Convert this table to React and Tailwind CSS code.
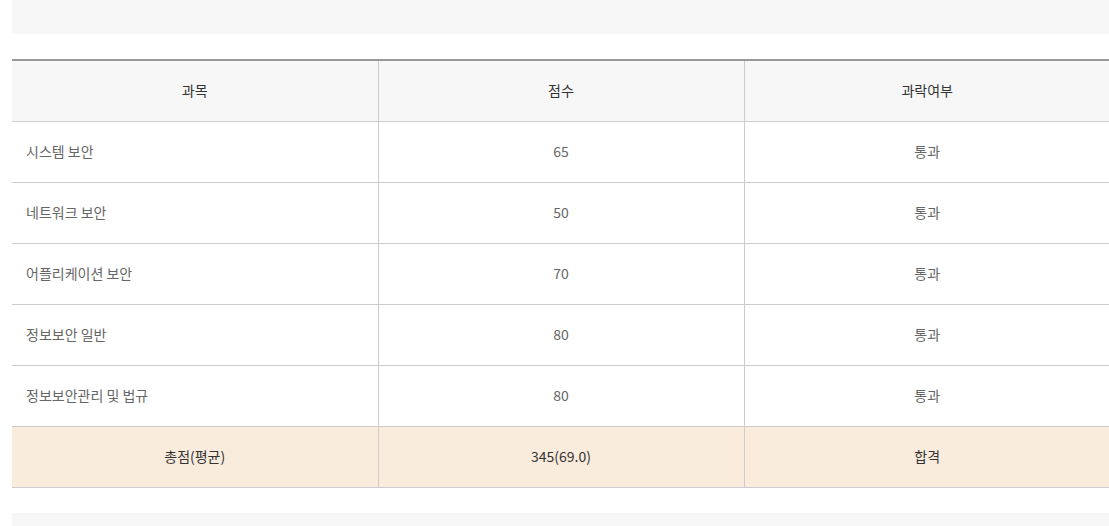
import React from "react";

const rows = [
  { subject: "시스템 보안", score: "65", result: "통과" },
  { subject: "네트워크 보안", score: "50", result: "통과" },
  { subject: "어플리케이션 보안", score: "70", result: "통과" },
  { subject: "정보보안 일반", score: "80", result: "통과" },
  { subject: "정보보안관리 및 법규", score: "80", result: "통과" },
];

const App = () => {
  return (
    <div
      className="w-[1110px] pl-3 bg-white text-[14px]"
      style={{ fontFamily: '"Noto Sans CJK KR", "Noto Sans", sans-serif' }}
    >
      <div className="h-[34px] bg-[#f7f7f7]" />

      <table className="w-[1098px] mt-[25px] border-collapse table-fixed border-t-2 border-t-[#999]">
        <colgroup>
          <col className="w-[366px]" />
          <col className="w-[366px]" />
          <col className="w-[366px]" />
        </colgroup>
        <thead>
          <tr className="h-[61px] bg-[#f7f7f7] text-[#333]">
            <th className="font-normal border-b border-[#ccc] border-r">과목</th>
            <th className="font-normal border-b border-[#ccc] border-r">점수</th>
            <th className="font-normal border-b border-[#ccc]">과락여부</th>
          </tr>
        </thead>
        <tbody className="text-[#666]">
          {rows.map((row) => (
            <tr key={row.subject} className="h-[61px]">
              <td className="pl-[14px] border-b border-r border-[#ccc]">{row.subject}</td>
              <td className="text-center border-b border-r border-[#ccc]">{row.score}</td>
              <td className="text-center border-b border-[#ccc]">{row.result}</td>
            </tr>
          ))}
          <tr className="h-[61px] bg-[#faecdd] text-[#333]">
            <td className="text-center border-b border-r border-[#ccc]">총점(평균)</td>
            <td className="text-center border-b border-r border-[#ccc]">345(69.0)</td>
            <td className="text-center border-b border-[#ccc]">합격</td>
          </tr>
        </tbody>
      </table>

      <div className="h-[20px] mt-[25px] bg-[#f7f7f7]" />
    </div>
  );
};

export default App;
